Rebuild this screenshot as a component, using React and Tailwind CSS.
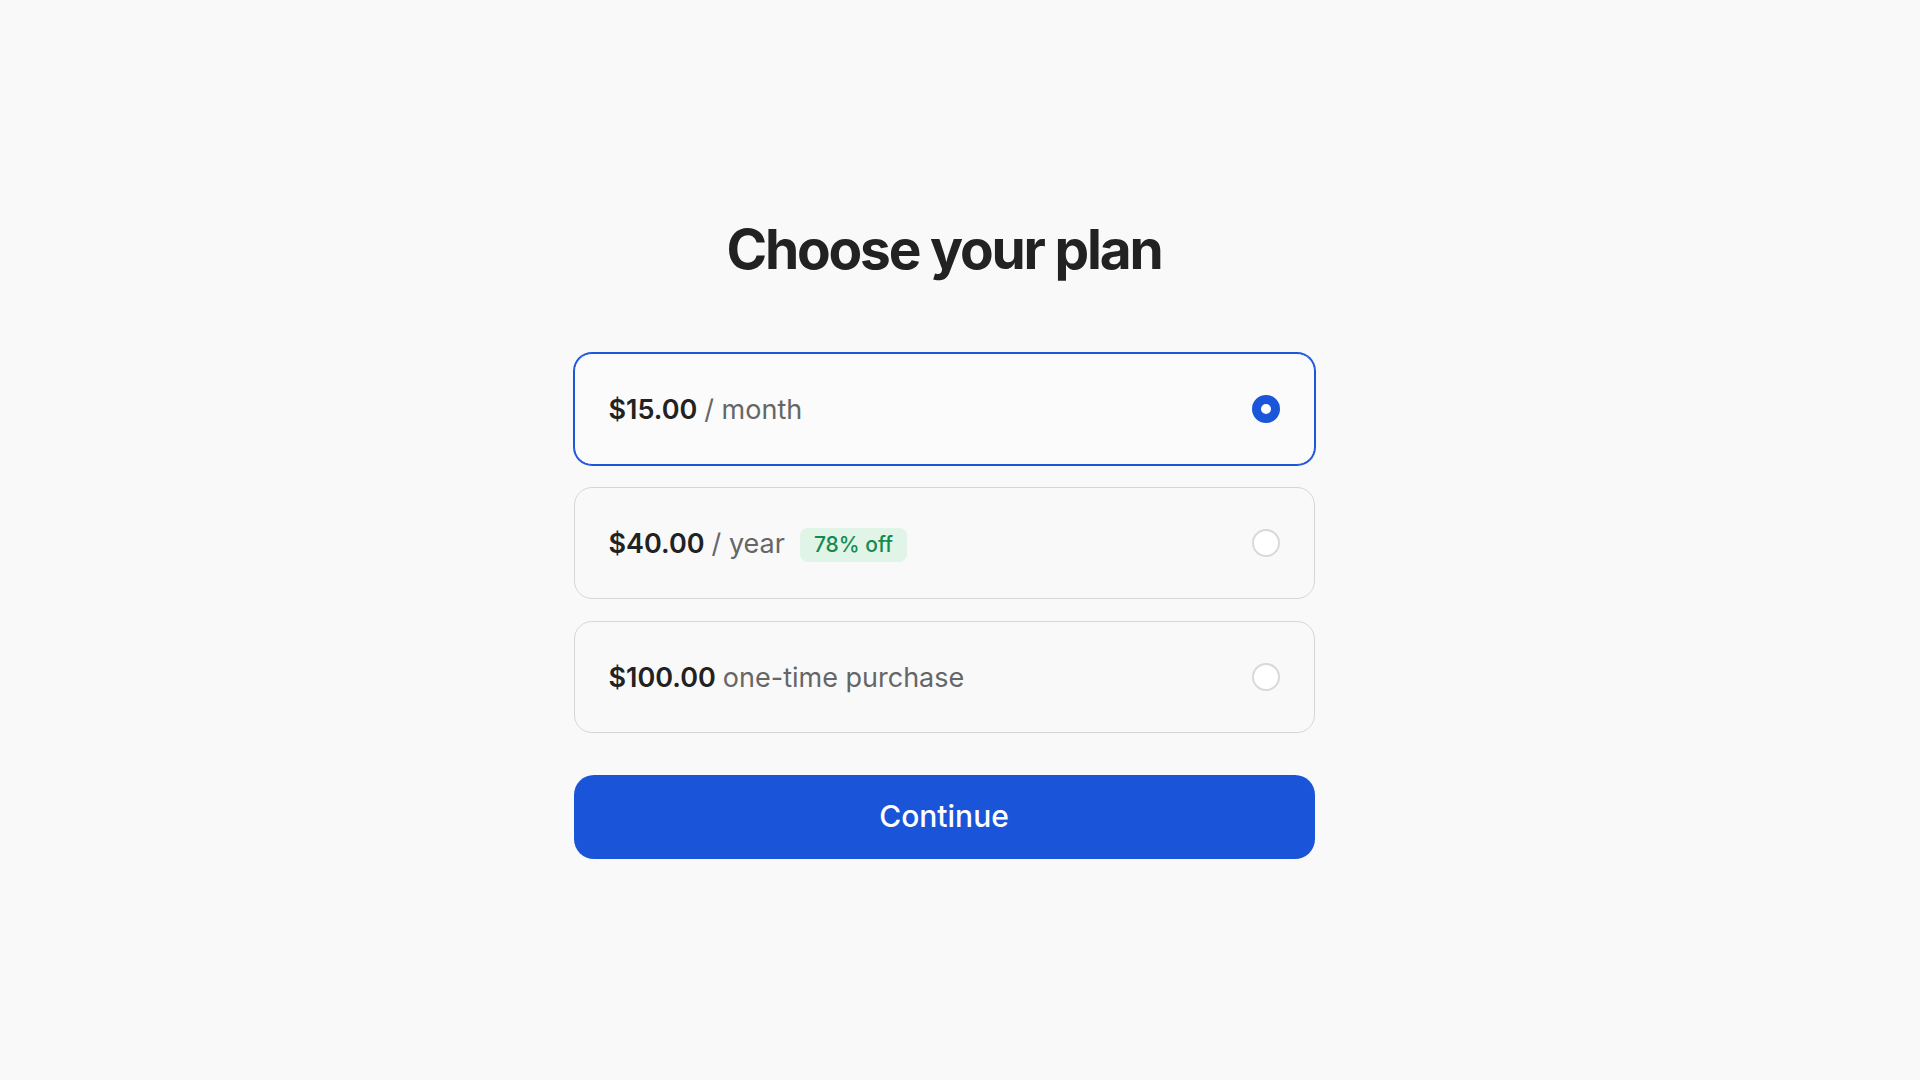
import React, { useState } from "react";

const plans = [
  { id: "month", price: "$15.00", suffix: "/ month" },
  { id: "year", price: "$40.00", suffix: "/ year", badge: "78% off" },
  { id: "once", price: "$100.00", suffix: "one-time purchase" },
];

export default function App() {
  const [selected, setSelected] = useState("month");
  return (
    <div
      className="min-h-screen bg-[#f9f9f9] flex items-center justify-center pr-[32px]"
      style={{ fontFamily: "Inter, 'Noto Sans', sans-serif" }}
    >
      <div className="w-[741px] flex flex-col">
        <h1 className="text-[55px] leading-none font-bold tracking-[-0.04em] text-[#222222] text-center mb-[76px]">
          Choose your plan
        </h1>
        <div className="flex flex-col gap-[22px]">
          {plans.map((p) => {
            const isSel = selected === p.id;
            return (
              <button
                key={p.id}
                onClick={() => setSelected(p.id)}
                className={
                  isSel
                    ? "h-[112px] rounded-[18px] border border-[#1d56db] ring-1 ring-[#1d56db] bg-[#fbfbfb] flex items-center justify-between pl-[34px] pr-[34px] text-left"
                    : "h-[112px] rounded-[18px] border border-[#d6d6d6] bg-[#f9f9f9] flex items-center justify-between pl-[34px] pr-[34px] text-left"
                }
              >
                <span className="flex items-center pt-[4px]">
                  <span className="text-[27px] font-semibold text-[#222222]">
                    {p.price}
                  </span>
                  <span className="text-[27px] text-[#666666] ml-[7px]">
                    {p.suffix}
                  </span>
                  {p.badge && (
                    <span className="ml-[15px] h-[34px] px-[14px] rounded-[8px] bg-[#e0f4e7] text-[#168a4c] text-[21px] font-medium flex items-center">
                      {p.badge}
                    </span>
                  )}
                </span>
                <span
                  className={
                    isSel
                      ? "w-[28px] h-[28px] rounded-full border-[9px] border-[#1b55d9] bg-white"
                      : "w-[28px] h-[28px] rounded-full border-2 border-[#d9d9d9] bg-white"
                  }
                />
              </button>
            );
          })}
        </div>
        <button className="mt-[42px] h-[84px] rounded-[20px] bg-[#1a55d9] text-white text-[30px] font-medium">
          Continue
        </button>
      </div>
    </div>
  );
}
